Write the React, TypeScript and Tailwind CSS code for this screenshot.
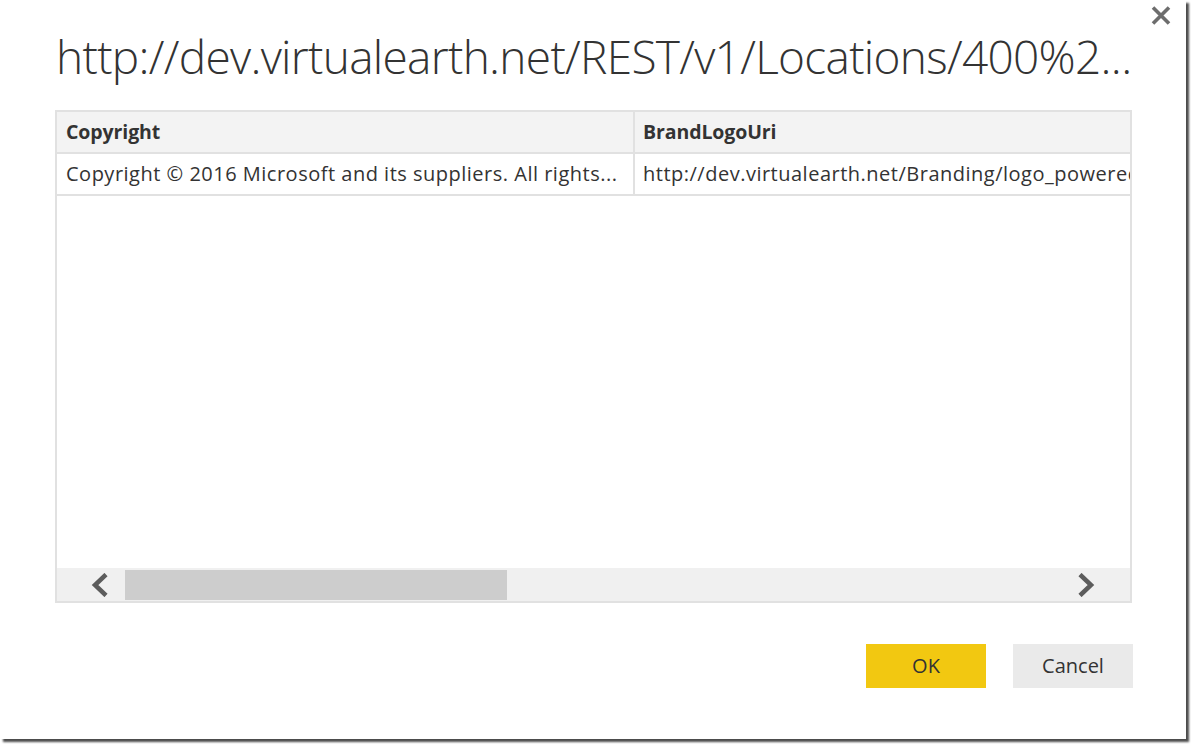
import React from "react";

const font = { fontFamily: '"Open Sans", "Noto Sans", sans-serif' };

function Chevron({ dir }: { dir: "left" | "right" }) {
  return (
    <svg width="18" height="24" viewBox="0 0 18 24">
      {dir === "left" ? (
        <polyline points="15,1.5 4,12 15,22.5" fill="none" stroke="#5c5c5c" strokeWidth="4.5" strokeLinejoin="miter" />
      ) : (
        <polyline points="3,1.5 14,12 3,22.5" fill="none" stroke="#5c5c5c" strokeWidth="4.5" strokeLinejoin="miter" />
      )}
    </svg>
  );
}

export default function App() {
  return (
    <div className="w-[1191px] h-[744px] bg-white overflow-hidden" style={font}>
      <div className="relative w-[1186px] h-[739px] bg-white shadow-[3px_3px_2px_rgba(0,0,0,0.7)] flex flex-col">
        <button className="absolute top-[5px] left-[1151px] w-[20px] h-[21px] flex items-center justify-center">
          <svg width="20" height="21" viewBox="0 0 20 21">
            <path d="M2 2.5 L18 18.5 M18 2.5 L2 18.5" stroke="#6d6d6d" strokeWidth="3.6" />
          </svg>
        </button>

        <div className="pt-[26px] pl-[56px] h-[110px]">
          <div className="text-[46px] leading-[60px] font-light text-[#333333] whitespace-nowrap tracking-[-0.7px]">
            http://dev.virtualearth.net/REST/v1/Locations/400%2...
          </div>
        </div>

        <div className="ml-[55px] w-[1077px] h-[493px] border-2 border-[#e1e1e1] flex flex-col">
          <div className="h-[42px] bg-[#f3f3f3] border-b-2 border-[#e1e1e1] flex shrink-0">
            <div className="w-[578px] border-r-2 border-[#e1e1e1] pl-[9px] flex items-center text-[19.5px] font-bold text-[#333333] tracking-[-0.1px]">
              Copyright
            </div>
            <div className="flex-1 pl-[8px] flex items-center text-[19.5px] font-bold text-[#333333] tracking-[-0.1px]">
              BrandLogoUri
            </div>
          </div>
          <div className="h-[42px] border-b-2 border-[#e1e1e1] flex shrink-0">
            <div className="w-[578px] border-r-2 border-[#e1e1e1] pl-[9px] pr-[4px] flex items-center text-[20px] tracking-[0.5px] text-[#333333] min-w-0 overflow-hidden">
              <span className="whitespace-nowrap">Copyright © 2016 Microsoft and its suppliers. All rights...</span>
            </div>
            <div className="flex-1 pl-[8px] flex items-center text-[20px] tracking-[0.5px] text-[#333333] overflow-hidden min-w-0">
              <span className="whitespace-nowrap">http://dev.virtualearth.net/Branding/logo_powered_by.png</span>
            </div>
          </div>
          <div className="flex-1" />
          <div className="h-[33px] bg-[#f0f0f0] flex items-center shrink-0">
            <div className="w-[68px] flex items-center pl-[34px]">
              <Chevron dir="left" />
            </div>
            <div className="w-[382px] h-[30px] bg-[#cdcdcd]" />
            <div className="flex-1" />
            <div className="w-[53px] flex items-center">
              <Chevron dir="right" />
            </div>
          </div>
        </div>

        <div className="mt-[41px] flex justify-end gap-[27px] pr-[53px]">
          <button className="w-[120px] h-[44px] bg-[#f2c811] text-[20px] text-[#333333]">OK</button>
          <button className="w-[120px] h-[44px] bg-[#eaeaea] text-[20px] text-[#333333]">Cancel</button>
        </div>
      </div>
    </div>
  );
}
